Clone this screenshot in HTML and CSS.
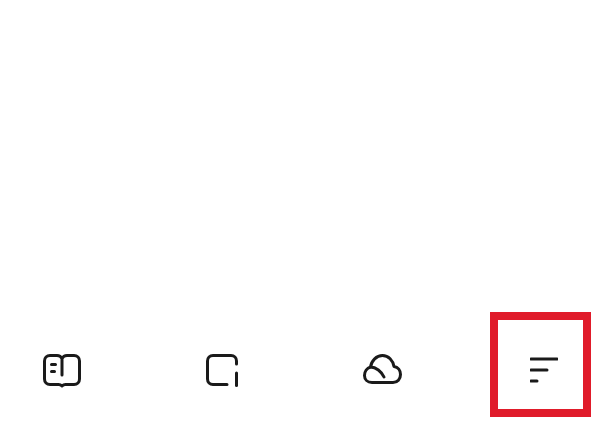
FILE: index.html
```html
<!DOCTYPE html>
<html lang="en">
<head>
  <meta charset="UTF-8">
  <meta name="viewport" content="width=device-width, initial-scale=1.0">
  <title>Bottom bar</title>
  <link rel="stylesheet" href="styles.css">
</head>
<body>
  <nav class="bottom-bar">
    <div class="tabs">
      <!-- book -->
      <svg class="tab-icon" width="38" height="34" viewBox="0 0 38 34">
        <path d="M19 4.500C18 2.500 16.500 1.500 14 1.500H7C3.800 1.500 1.500 3.800 1.500 7V25C1.500 28.200 3.800 30.500 7 30.500H15.500C17 30.500 18 31 19 32C20 31 21 30.500 22.500 30.500H31C34.200 30.500 36.500 28.200 36.500 25V7C36.500 3.800 34.200 1.500 31 1.500H24C21.500 1.500 20 2.500 19 4.500V21" />
        <path d="M8.500 10.500H12.500M8.500 17.500H11.500" />
      </svg>
      <!-- square with i -->
      <svg class="tab-icon" width="32" height="33" viewBox="0 0 32 33">
        <path d="M30.500 10V7C30.500 3.800 28.200 1.500 25 1.500H7C3.800 1.500 1.500 3.800 1.500 7V25C1.500 28.200 3.800 30.500 7 30.500H21" />
        <path d="M30.500 19V31.500" />
      </svg>
      <!-- cloud -->
      <svg class="tab-icon" width="39" height="30" viewBox="0 0 39 30">
        <path d="M9 28.500C4.500 28.500 1.500 25.500 1.500 21.500C1.500 17.500 4 14 7.500 13C8.500 6.500 13.500 1.500 19.500 1.500C25.500 1.500 30 6.500 31 12.500C35 13 37.500 16.500 37.500 20.500C37.500 25 34.500 28.500 30 28.500Z" />
        <path d="M7.500 13C13 13 18.500 17.500 21 23" />
      </svg>
    </div>
    <div class="active-tab">
      <!-- sort lines -->
      <svg class="tab-icon" width="28" height="26" viewBox="0 0 28 26">
        <path d="M1 2H27M1 13H17M1 24H7" />
      </svg>
    </div>
  </nav>
</body>
</html>
```

FILE: styles.css
```css
* {
  margin: 0;
  padding: 0;
  box-sizing: border-box;
}

body {
  background: #fff;
  height: 432px;
  overflow: hidden;
  padding-top: 312px;
}

.bottom-bar {
  display: flex;
  justify-content: space-between;
  align-items: flex-start;
  padding: 0 9px 0 43px;
}

.tabs {
  display: flex;
  align-items: flex-start;
  gap: 125px;
  padding-top: 42px;
}

.tab-icon {
  display: block;
  fill: none;
  stroke: #1a1a1a;
  stroke-width: 3;
  stroke-linecap: round;
  stroke-linejoin: round;
}

.active-tab {
  width: 101px;
  height: 105px;
  border: 8px solid #e01b2a;
  padding: 37px 0 0 32px;
}
```
